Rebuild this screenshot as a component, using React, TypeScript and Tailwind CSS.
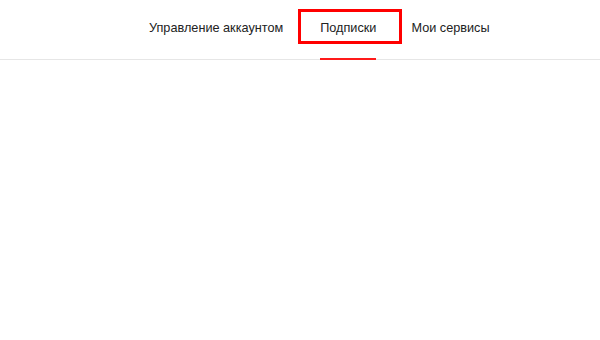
export default function App() {
  return (
    <div className="w-[600px] h-[340px] bg-white" style={{ fontFamily: '"Liberation Sans", Arial, sans-serif' }}>
      <div className="relative h-[60px] border-b border-[#e6e6e6] flex pl-[149px]">
        <div className="relative h-full pt-[20px]">
          <span className="block text-[12.7px] leading-[16px] text-[#222222] whitespace-nowrap">Управление аккаунтом</span>
        </div>
        <div className="relative h-full pt-[20px] ml-[37px]">
          <span className="block text-[12.7px] leading-[16px] text-[#222222] whitespace-nowrap">Подписки</span>
          <div className="absolute left-0 right-0 bottom-[-1px] h-[2px] bg-[#ff1a1a]" />
          <div className="absolute left-[-22px] right-[-26px] top-[9px] h-[35px] border-[3px] border-[#ff0000]" />
        </div>
        <div className="relative h-full pt-[20px] ml-[35px]">
          <span className="block text-[12.7px] leading-[16px] text-[#222222] whitespace-nowrap">Мои сервисы</span>
        </div>
      </div>
    </div>
  );
}
